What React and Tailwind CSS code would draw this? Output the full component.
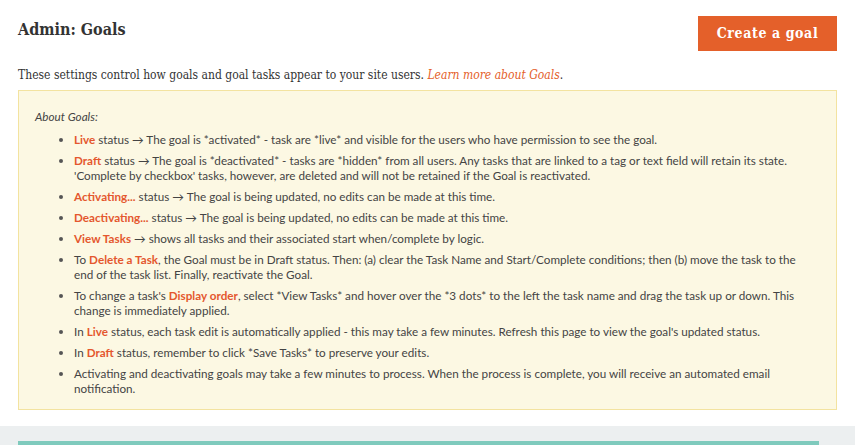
import React from "react";

const slab = { fontFamily: '"DejaVu Serif", "Liberation Serif", serif' };
const sans = { fontFamily: 'Lato, "Open Sans", sans-serif' };

const Hl = ({ children }) => <span className="font-bold text-[#e4572e]">{children}</span>;

const items = [
  [<Hl key="a">Live</Hl>, " status → The goal is *activated* - task are *live* and visible for the users who have permission to see the goal."],
  [
    <Hl key="a">Draft</Hl>,
    " status → The goal is *deactivated* - tasks are *hidden* from all users. Any tasks that are linked to a tag or text field will retain its state. 'Complete by checkbox' tasks, however, are deleted and will not be retained if the Goal is reactivated.",
  ],
  [<Hl key="a">Activating...</Hl>, " status → The goal is being updated, no edits can be made at this time."],
  [<Hl key="a">Deactivating...</Hl>, " status → The goal is being updated, no edits can be made at this time."],
  [<Hl key="a">View Tasks</Hl>, " → shows all tasks and their associated start when/complete by logic."],
  [
    "To ",
    <Hl key="a">Delete a Task</Hl>,
    ", the Goal must be in Draft status. Then: (a) clear the Task Name and Start/Complete conditions; then (b) move the task to the end of the task list. Finally, reactivate the Goal.",
  ],
  [
    "To change a task's ",
    <Hl key="a">Display order</Hl>,
    ", select *View Tasks* and hover over the *3 dots* to the left the task name and drag the task up or down. This change is immediately applied.",
  ],
  ["In ", <Hl key="a">Live</Hl>, " status, each task edit is automatically applied - this may take a few minutes. Refresh this page to view the goal's updated status."],
  ["In ", <Hl key="a">Draft</Hl>, " status, remember to click *Save Tasks* to preserve your edits."],
  ["Activating and deactivating goals may take a few minutes to process. When the process is complete, you will receive an automated email notification."],
];

export default function App() {
  return (
    <div className="w-[855px] h-[445px] bg-white overflow-hidden">
      <div className="px-[18px]">
        <div className="flex items-start justify-between pt-4">
          <h1 className="text-[16px] font-bold text-[#333] mt-[2px] font-stretch-condensed" style={slab}>
            Admin: Goals
          </h1>
          <button
            className="h-[35px] w-[139px] bg-[#e4602a] text-white text-[14px] font-bold tracking-[0.6px] font-stretch-condensed"
            style={slab}
          >
            Create a goal
          </button>
        </div>
        <p className="mt-[15px] text-[12px] text-[#333] font-stretch-condensed" style={slab}>
          These settings control how goals and goal tasks appear to your site users.{" "}
          <a className="italic text-[#e4602a]">Learn more about Goals</a>.
        </p>
        <div
          className="mt-[6px] h-[320px] border border-[#f3e3a0] bg-[#fcf8e3] pl-4 pr-[26px] pt-[18px] text-[11.7px] leading-[15px] text-[#444]"
          style={sans}
        >
          <p className="italic">About Goals:</p>
          <ul className="mt-[8px] ml-[39px] list-disc space-y-[6px] marker:text-[#555]">
            {items.map((parts, i) => (
              <li key={i}>{parts}</li>
            ))}
          </ul>
        </div>
      </div>
      <div className="mt-[16px] h-[30px] bg-[#eceff0] px-[18px] pt-[15px]">
        <div className="w-[801px] h-[10px] bg-[#7fcabd]" />
      </div>
    </div>
  );
}
